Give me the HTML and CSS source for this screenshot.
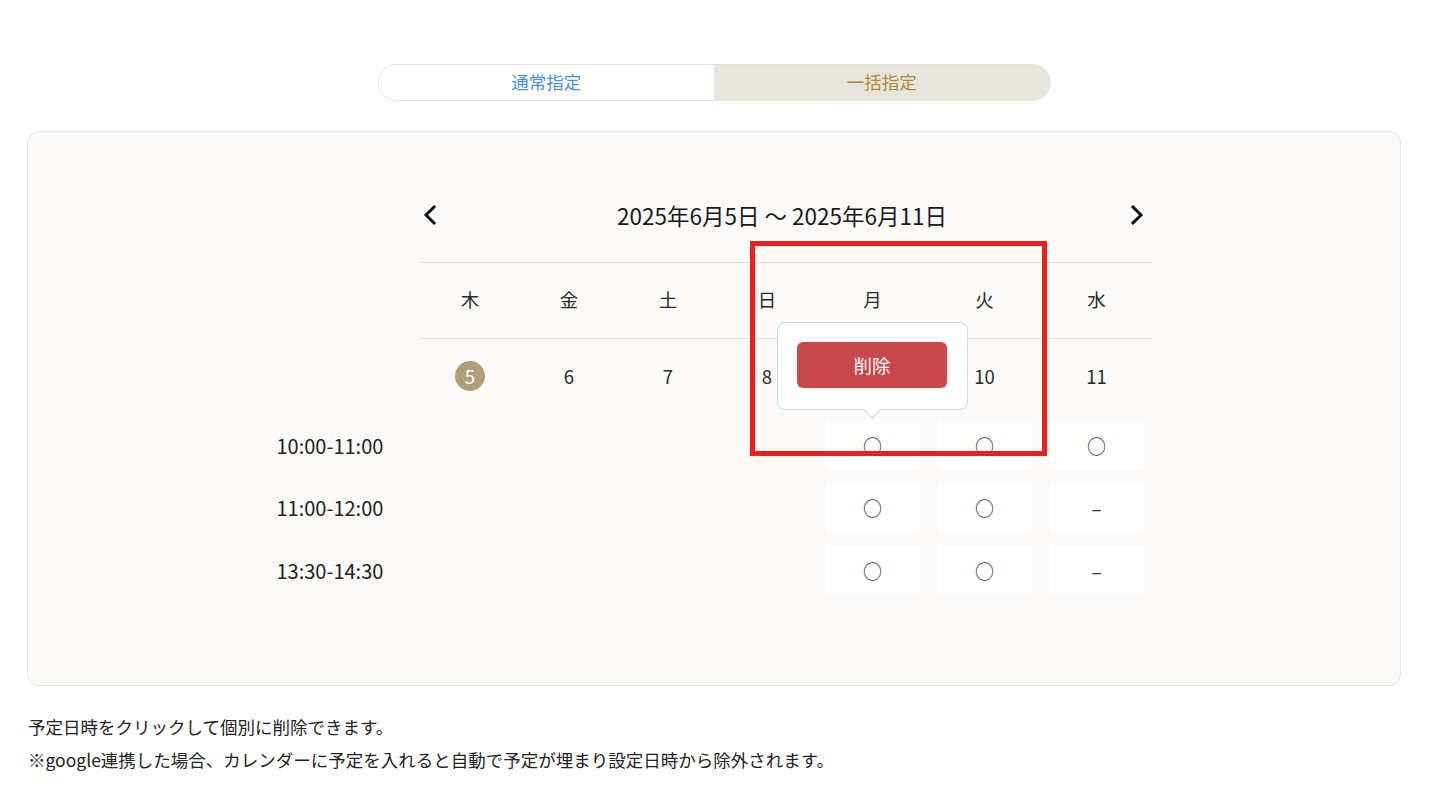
FILE: index.html
```html
<!DOCTYPE html>
<html lang="ja">
<head>
  <meta charset="UTF-8">
  <title>予定日時の設定</title>
  <meta name="viewport" content="width=device-width, initial-scale=1.0">
  <link rel="stylesheet" href="styles.css">
</head>
<body>
  <div class="page">
    <!-- 指定方法切り替え -->
    <div class="mode-switch">
      <a href="#" class="mode-btn">通常指定</a>
      <a href="#" class="mode-btn active">一括指定</a>
    </div>

    <div class="cal-card">
      <div class="cal">
        <div class="cal-nav">
          <a href="#" class="nav-arrow">
            <svg width="16" height="22" viewBox="0 0 16 22"><path d="M12 3 L4 11 L12 19" fill="none" stroke="#111" stroke-width="3" stroke-linecap="square"/></svg>
          </a>
          <div class="cal-title">2025年6月5日 ～ 2025年6月11日</div>
          <a href="#" class="nav-arrow">
            <svg width="16" height="22" viewBox="0 0 16 22"><path d="M4 3 L12 11 L4 19" fill="none" stroke="#111" stroke-width="3" stroke-linecap="square"/></svg>
          </a>
        </div>

        <div class="cal-row row-head">
          <div class="time-label"></div>
          <div class="day">木</div>
          <div class="day">金</div>
          <div class="day">土</div>
          <div class="day">日</div>
          <div class="day">月</div>
          <div class="day">火</div>
          <div class="day">水</div>
        </div>

        <div class="cal-row row-date">
          <div class="time-label"></div>
          <div class="date"><span class="today">5</span></div>
          <div class="date">6</div>
          <div class="date">7</div>
          <div class="date">8</div>
          <div class="date has-pop">
            <div class="popover">
              <button class="delete-btn">削除</button>
            </div>
          </div>
          <div class="date">10</div>
          <div class="date">11</div>
        </div>

        <div class="cal-row row-slot">
          <div class="time-label">10:00-11:00</div>
          <div class="slot"></div>
          <div class="slot"></div>
          <div class="slot"></div>
          <div class="slot"></div>
          <div class="slot"><span class="slot-box">○</span></div>
          <div class="slot"><span class="slot-box">○</span></div>
          <div class="slot"><span class="slot-box">○</span></div>
        </div>
        <div class="cal-row row-slot">
          <div class="time-label">11:00-12:00</div>
          <div class="slot"></div>
          <div class="slot"></div>
          <div class="slot"></div>
          <div class="slot"></div>
          <div class="slot"><span class="slot-box">○</span></div>
          <div class="slot"><span class="slot-box">○</span></div>
          <div class="slot"><span class="slot-box">–</span></div>
        </div>
        <div class="cal-row row-slot">
          <div class="time-label">13:30-14:30</div>
          <div class="slot"></div>
          <div class="slot"></div>
          <div class="slot"></div>
          <div class="slot"></div>
          <div class="slot"><span class="slot-box">○</span></div>
          <div class="slot"><span class="slot-box">○</span></div>
          <div class="slot"><span class="slot-box">–</span></div>
        </div>
      </div>
      <!-- 注目枠 -->
      <div class="highlight"></div>
    </div>

    <div class="notes">
      <p>予定日時をクリックして個別に削除できます。</p>
      <p>※google連携した場合、カレンダーに予定を入れると自動で予定が埋まり設定日時から除外されます。</p>
    </div>
  </div>
</body>
</html>
```

FILE: styles.css
```css
body {
  font-family: 'Noto Sans CJK JP', 'Noto Sans', sans-serif;
  margin: 0;
  padding: 0;
  background: #fff;
  color: #222;
}
.page {
  padding: 64px 33px 0 27px;
}
.mode-switch {
  width: 673px;
  height: 37px;
  margin: 0 auto;
  display: flex;
  border: 1px solid #e4e1db;
  border-radius: 19px;
  overflow: hidden;
  box-sizing: border-box;
}
.mode-btn {
  flex: 1;
  display: flex;
  align-items: center;
  justify-content: center;
  font-size: 17.5px;
  color: #4a8ee8;
  background: #fff;
  text-decoration: none;
  padding-bottom: 2px;
}
.mode-btn.active {
  background: #e8e4de;
  color: #ad8c38;
}
.cal-card {
  position: relative;
  margin-top: 30px;
  background: #fbfaf8;
  border: 1px solid #e8e4df;
  border-radius: 12px;
  padding: 68px 0 82px;
}
.cal {
  width: 877px;
  margin: 0 auto;
}
.cal-nav {
  margin-left: 145px;
  height: 30px;
  margin-bottom: 32px;
  display: flex;
  align-items: center;
  justify-content: space-between;
  padding: 0 7px 0 1px;
}
.nav-arrow {
  display: flex;
  align-items: center;
}
.cal-title {
  font-size: 22.5px;
  color: #1a1a1a;
  margin-left: -3px;
}
.cal-row {
  display: grid;
  grid-template-columns: 145px repeat(4, 99px) repeat(3, 112px);
}
.day, .date {
  display: flex;
  align-items: center;
  justify-content: center;
  font-size: 18.5px;
  color: #2a2a2a;
}
.row-head .day {
  height: 77px;
  padding-bottom: 3px;
  box-sizing: border-box;
  border-top: 1px solid #e4e1dc;
  border-bottom: 1px solid #e4e1dc;
}
.row-date .date {
  height: 76px;
  padding-bottom: 3px;
  box-sizing: border-box;
}
.today {
  width: 30px;
  height: 30px;
  border-radius: 50%;
  background: #b09e78;
  color: #fff;
  display: flex;
  align-items: center;
  justify-content: center;
}
.has-pop {
  position: relative;
}
.popover {
  position: absolute;
  top: -17px;
  left: 50%;
  margin-left: -96px;
  width: 191px;
  height: 88px;
  box-sizing: border-box;
  background: #fff;
  border: 1px solid #d4d4d4;
  border-radius: 8px;
  display: flex;
  align-items: flex-start;
  justify-content: center;
  padding-top: 19px;
  z-index: 2;
}
.popover::after {
  content: "";
  position: absolute;
  left: 50%;
  bottom: -7px;
  width: 12px;
  height: 12px;
  margin-left: -6px;
  background: #fff;
  border-right: 1px solid #d4d4d4;
  border-bottom: 1px solid #d4d4d4;
  transform: rotate(45deg);
}
.delete-btn {
  width: 150px;
  height: 46px;
  border: none;
  border-radius: 6px;
  background: #c9484b;
  color: #fff;
  font-family: inherit;
  font-size: 18.5px;
}
.time-label {
  display: flex;
  align-items: center;
  font-size: 20px;
  color: #222;
  padding-left: 1px;
  padding-bottom: 2px;
}
.slot {
  padding: 5px 9px 7.5px;
}
.slot-box {
  height: 50px;
  background: #fff;
  display: flex;
  align-items: center;
  justify-content: center;
  font-size: 19px;
  color: #333;
}
.highlight {
  position: absolute;
  left: 722px;
  top: 109px;
  width: 297px;
  height: 215px;
  border: 5px solid #e8201f;
  box-sizing: border-box;
  z-index: 3;
}
.notes {
  margin-top: 24px;
  font-size: 17.5px;
  line-height: 33px;
  color: #222;
}
.notes p {
  margin: 0;
  padding-left: 1px;
}
```
